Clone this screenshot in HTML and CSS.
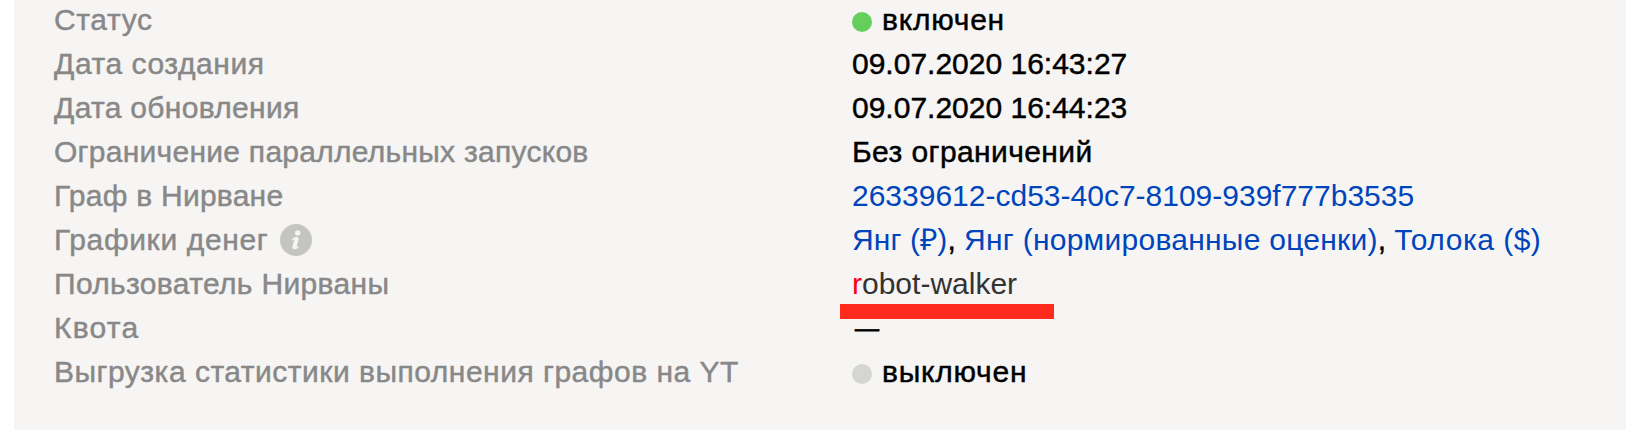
FILE: index.html
```html
<!DOCTYPE html>
<html lang="ru">
<head>
<meta charset="utf-8">
<title>Информация</title>
<link rel="stylesheet" href="styles.css">
</head>
<body>
<dl class="panel">
  <dt><span class="t l1">Статус</span></dt><dd><i class="dot on"></i><span class="t v1">включен</span></dd>
  <dt><span class="t l2">Дата создания</span></dt><dd><span class="t">09.07.2020 16:43:27</span></dd>
  <dt><span class="t l3">Дата обновления</span></dt><dd><span class="t">09.07.2020 16:44:23</span></dd>
  <dt><span class="t l4">Ограничение параллельных запусков</span></dt><dd><span class="t v4">Без ограничений</span></dd>
  <dt><span class="t l5">Граф в Нирване</span></dt><dd><a class="t">26339612-cd53-40c7-8109-939f777b3535</a></dd>
  <dt><span class="t l6">Графики денег</span><svg class="info" viewBox="0 0 32 32"><circle cx="16" cy="16" r="16"/><circle class="mark" cx="17.7" cy="8.9" r="2.7"/><path class="mark" d="M11.300 15.800C12.500 14 14.600 12.900 16.700 12.900C18.500 12.900 19 14.100 18.600 15.700L16.700 22.200C16.500 23.200 17.200 22.900 18.800 21.700C19 23.300 16.800 25.300 14.500 25.300C12.500 25.300 12 24 12.500 22.200L14.300 16.100C14.500 15.200 13.200 15.500 11.800 16.500Z"/></svg></dt><dd><span class="t"><a class="g1">Янг (₽)</a>, <a class="g2">Янг (нормированные оценки)</a>, <a class="g3">Толока ($)</a></span></dd>
  <dt><span class="t l7">Пользователь Нирваны</span></dt><dd class="user"><span class="t"><b>r</b>obot-walker</span></dd>
  <dt><span class="t l8">Квота</span></dt><dd><span class="t dash">—</span></dd>
  <dt><span class="t l9">Выгрузка статистики выполнения графов на YT</span></dt><dd><i class="dot"></i><span class="t v1">выключен</span></dd>
</dl>
</body>
</html>
```
FILE: styles.css
```css
body { margin: 0; background: #fff; font: 30px/40px "Liberation Sans", Arial, sans-serif; color: #000; overflow: hidden; }
.panel { box-sizing: border-box; margin: 0 0 0 14px; padding: 0 0 0 40px; height: 430px; background: #f6f5f4; display: grid; grid-template-columns: 798px 1fr; grid-auto-rows: 44px; align-content: start; }
dt, dd { margin: 0; display: flex; align-items: center; white-space: pre; }
dt { color: #888; }
.t { padding-bottom: 4px; -webkit-text-stroke: .45px currentColor; }
a, a.t, .user .t { -webkit-text-stroke-width: 0; }
a { color: #04b; }
.l1 { letter-spacing: .65px; }
.l2 { letter-spacing: .56px; }
.l3 { letter-spacing: .31px; }
.l4 { letter-spacing: .27px; }
.l5 { letter-spacing: .25px; }
.l6 { letter-spacing: .65px; }
.l7 { letter-spacing: .34px; }
.l8 { letter-spacing: 1.25px; }
.l9 { letter-spacing: .5px; }
.v1 { letter-spacing: .76px; }
.v4 { letter-spacing: .41px; }
.g1 { letter-spacing: .13px; }
.g2 { letter-spacing: .26px; }
.g3 { letter-spacing: .5px; }
.dot { width: 20px; height: 20px; border-radius: 50%; background: #d5d5d4; margin-right: 10px; }
.on { background: #65cf5c; }
.info { width: 32px; height: 32px; margin: 0 0 4px 12px; fill: #c4c4c3; }
.info .mark { fill: #f6f5f4; }
.dash { font-size: 24px; margin-left: 3px; -webkit-text-stroke-width: .8px; }
.user { position: relative; color: #333; }
.user b { color: #f01; font-weight: normal; }
.user::after { content: ""; position: absolute; left: -12px; top: 40px; width: 214px; height: 15px; background: #ff2a1b; }
```
